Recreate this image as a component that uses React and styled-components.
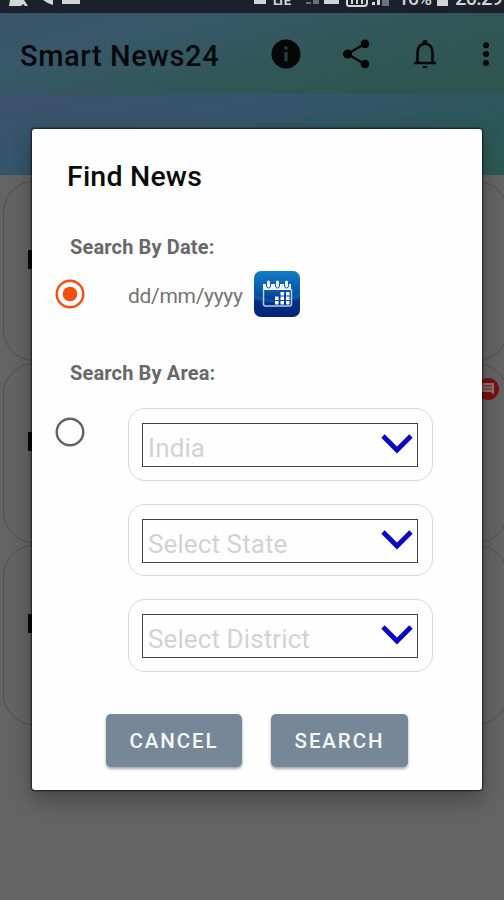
import React from "react";
import styled, { createGlobalStyle } from "styled-components";

const Global = createGlobalStyle`
  * { box-sizing: border-box; }
  body { margin: 0; font-family: Roboto, "Noto Sans", sans-serif; }
  svg { display: block; }
`;
const Screen = styled.main`
  position: relative; width: 504px; height: 900px; overflow: hidden; background: #646464;
`;
const StatusBar = styled.div`
  height: 13px; overflow: hidden; background: #1b212c; color: #d4d4d4;
`;
const Header = styled.header`
  height: 81px; display: flex; align-items: center; padding: 0 0 0 20px;
  background: linear-gradient(165deg, #3a5369 0%, #38586a 25%, #305757 60%, #30544d 100%);
`;
const AppTitle = styled.h1`
  margin: 4px 0 0; width: 251px; font-size: 29px; line-height: 34px; font-weight: 500;
  letter-spacing: 0.62px; color: #060809; white-space: nowrap;
`;
const HeaderIcons = styled.div`
  display: flex; align-items: center; height: 30px; color: #050606;
`;
const IconSlot = styled.span`
  width: ${(p) => p.$w}px; flex: none;
`;
const SubBar = styled.div`
  height: 81px;
  background: linear-gradient(168deg, #3c526b 0%, #35556a 40%, #2c5759 70%, #2c594f 100%);
`;
const CardList = styled.section`
  padding: 6px 0 0 3px; display: flex; flex-direction: column; gap: 2px; width: 508px;
`;
const Card = styled.article`
  height: 180px; border: 1px solid #505050; border-radius: 31px;
  display: flex; align-items: flex-start; justify-content: space-between; padding: 68px 8px 0 24px;
`;
const CardLetter = styled.span`
  width: 10px; height: 19px; background: #090909;
`;
const CommentBadge = styled.span`
  margin-top: -54px;
`;
const Overlay = styled.div`
  position: absolute; inset: 0; display: flex; align-items: flex-start; padding: 129px 0 0 32px;
`;
const Dialog = styled.section`
  width: 450px; height: 661px; background: #fefefe; border-radius: 3px; padding: 31px 0 0;
  box-shadow: 0 0 2px 1px rgba(0,0,0,.65), 0 10px 22px rgba(0,0,0,.3);
`;
const DialogTitle = styled.h2`
  margin: 0 0 0 35px; font-size: 28.5px; line-height: 34px; font-weight: 500;
  letter-spacing: 0.2px; color: #0b0b0b;
`;
const Label = styled.h3`
  margin: ${(p) => p.$top}px 0 0 38px; font-size: 20px; line-height: 24px; font-weight: 700; color: #686868;
  letter-spacing: 0.15px;
`;
const DateRow = styled.div`
  display: flex; align-items: center; height: 48px; margin-top: 11px; padding-left: 23px;
`;
const Radio = styled.span`
  flex: none; width: 30px; height: 30px; color: ${(p) => (p.$on ? "#f4500b" : "#626262")};
`;
const DateText = styled.span`
  margin: 3px 0 0 43px; width: 125px; font-size: 21px; line-height: 28px; color: #747474; letter-spacing: -.3px;
`;
const AreaRow = styled.div`
  display: flex; align-items: flex-start; padding: 23px 0 0 23px;
`;
const AreaRadio = styled.div`
  padding-top: 9px; width: 73px;
`;
const Fields = styled.div`
  display: flex; flex-direction: column; gap: 23px;
`;
const Field = styled.div`
  width: 305px; height: 72.6px; border: 1.5px solid #d9d9d9; border-radius: 17px; padding: 14px 13px 13px;
`;
const Select = styled.div`
  height: 44px; width: 276px; border: 1.5px solid #444; display: flex; justify-content: space-between;
  padding: 0 4px 0 5px; color: #d2d2d2; font-size: 26px; line-height: 49px; letter-spacing: .1px;
`;
const Chevron = styled.span`
  padding-top: 8px;
`;
const Actions = styled.div`
  display: flex; gap: 29px; margin: 42px 0 0 74px;
`;
const Button = styled.button`
  width: ${(p) => p.$w}px; height: 53px; border: 0; border-radius: 5px; background: #768898; color: #f7f9fa;
  padding: 2px 0 0; font: 500 20.5px Roboto, sans-serif; letter-spacing: 1.9px; box-shadow: 0 2px 3px rgba(0,0,0,.35);
`;

function StatusIcons() {
  return (
    <svg width="504" height="13" fill="currentColor">
      <path d="M10 0h14l4 6h-3l-2-2-2 2H9z M43 0h10v5q-5-1-10-5z M62 0h18v4H62z" />
      <path d="M254 0h12v4h-12z M324 0h15v4h-15z M437 0h11v6h-11z" />
      <path d="M347 0v4q0 2 2 2h15q3 0 3-3V0M352 0v4M357 0v4M362 0v4" fill="none" stroke="currentColor" strokeWidth="2" />
      <path d="M372 2h3v3h-3zM377 0h3v5h-3z" />
      <path d="M382 0h7v6h-7zM306 2h5v2h-5zM313 0h6v4h-6z" opacity=".45" />
      <text x="273" y="5" fontSize="13" fontWeight="700" textLength="18">LTE</text>
      <text x="398" y="5" fontSize="19" fontWeight="500" textLength="34">16%</text>
      <text x="455" y="5" fontSize="20" fontWeight="500" textLength="48">20:29</text>
    </svg>
  );
}
const InfoIcon = () => (
  <svg width="30" height="30" viewBox="0 0 30 30"><circle cx="15" cy="15" r="14.5" fill="currentColor" /><path d="M13.4 7.4h3.200v3.200h-3.200zM13.400 13h3.200v9.500h-3.200z" fill="#2c3f40" /></svg>
);
const ShareIcon = () => (
  <svg width="30" height="30" viewBox="0 0 30 30" fill="currentColor"><path d="M22.500 5 5.500 15l17 10" fill="none" stroke="currentColor" strokeWidth="2.400" /><circle cx="23" cy="4.900" r="4.300" /><circle cx="5.500" cy="15" r="4.500" /><circle cx="23" cy="25" r="4.300" /></svg>
);
const BellIcon = () => (
  <svg width="26" height="30" viewBox="0 0 26 30" fill="none" stroke="currentColor" strokeWidth="2.600"><path d="M2 24h22M5.500 24V13.500C5.500 8 8.500 4.700 13 4.700s7.500 3.300 7.500 8.800V24" /><path d="M10.500 4.500V3.500a2.500 2.500 0 0 1 5 0v1zM10.300 27h5.400q-.5 2.200-2.700 2.200t-2.700-2.200" fill="currentColor" stroke="none" /></svg>
);
const MoreIcon = () => (
  <svg width="8" height="30" viewBox="0 0 8 30" fill="currentColor"><circle cx="4" cy="6.300" r="3" /><circle cx="4" cy="15" r="3" /><circle cx="4" cy="24" r="3" /></svg>
);
function RadioMark({ on }) {
  return (
    <Radio $on={on}>
      <svg width="30" height="30" viewBox="0 0 30 30"><circle cx="15" cy="15" r="13.300" fill="none" stroke="currentColor" strokeWidth="2.400" />{on && <circle cx="15" cy="15" r="7.300" fill="currentColor" />}</svg>
    </Radio>
  );
}
function CalendarIcon() {
  return (
    <svg width="48" height="48" viewBox="0 0 48 48">
      <defs>
        <linearGradient id="sky" x2="0" y2="1"><stop stopColor="#147bc7" /><stop offset=".45" stopColor="#0759a9" /><stop offset=".65" stopColor="#052f86" /><stop offset="1" stopColor="#072477" /></linearGradient>
      </defs>
      <rect x="1" y="1" width="46" height="46" rx="7" fill="url(#sky)" />
      <path d="M1 24q23 11 46-1v5q-23 9-46 1z" fill="#1687cf" opacity=".35" />
      <path d="M10 14h28v6H10z" fill="#f0f6fd" />
      <path d="M10.500 19v15q0 2 2 2h24q2 0 2-2V19" fill="none" stroke="#b4cdea" strokeWidth="1.500" />
      <g fill="#eef6fd" stroke="#0b60ad" strokeWidth="1"><rect x="13.500" y="10" width="4" height="8" rx="2" /><rect x="22.500" y="10" width="4" height="8" rx="2" /><rect x="31.500" y="10" width="4" height="8" rx="2" /></g>
      <path d="M27.500 22h3.500v3.500h-3.500zM33 22h3.500v3.500H33zM22 26.500h3.500V30H22zM27.500 26.500h3.500V30h-3.500zM33 26.500h3.500V30H33zM22 31h3.500v3.500H22zM27.500 31h3.500v3.500h-3.500zM33 31h3.500v3.500H33z" fill="#fff" />
    </svg>
  );
}
const CommentIcon = () => (
  <svg width="22" height="22" viewBox="0 0 22 22"><circle cx="11" cy="11" r="11" fill="#7c1012" /><path d="M5 5h12v12l-3-3H5z" fill="#8b7373" /><path d="M7 8h8M7 11h8" stroke="#7c1012" strokeWidth="1.200" /></svg>
);

export default function App() {
  return (
    <Screen>
      <Global />
      <StatusBar><StatusIcons /></StatusBar>
      <Header>
        <AppTitle>Smart News24</AppTitle>
        <HeaderIcons>
          <IconSlot $w={71}><InfoIcon /></IconSlot>
          <IconSlot $w={70}><ShareIcon /></IconSlot>
          <IconSlot $w={70}><BellIcon /></IconSlot>
          <IconSlot $w={8}><MoreIcon /></IconSlot>
        </HeaderIcons>
      </Header>
      <SubBar />
      <CardList>
        {[false, true, false].map((comments, i) => (
          <Card key={i}><CardLetter />{comments && <CommentBadge><CommentIcon /></CommentBadge>}</Card>
        ))}
      </CardList>
      <Overlay>
        <Dialog role="dialog">
          <DialogTitle>Find News</DialogTitle>
          <Label $top={41}>Search By Date:</Label>
          <DateRow>
            <RadioMark on />
            <DateText>dd/mm/yyyy</DateText>
            <CalendarIcon />
          </DateRow>
          <Label $top={43}>Search By Area:</Label>
          <AreaRow>
            <AreaRadio><RadioMark /></AreaRadio>
            <Fields>
              {["India", "Select State", "Select District"].map((name) => (
                <Field key={name}>
                  <Select>
                    {name}
                    <Chevron><svg width="32" height="24" viewBox="0 0 32 24"><path d="M2 4l14 14L30 4" fill="none" stroke="#0b06c4" strokeWidth="4.800" /></svg></Chevron>
                  </Select>
                </Field>
              ))}
            </Fields>
          </AreaRow>
          <Actions>
            <Button $w={136}>CANCEL</Button>
            <Button $w={137}>SEARCH</Button>
          </Actions>
        </Dialog>
      </Overlay>
    </Screen>
  );
}
